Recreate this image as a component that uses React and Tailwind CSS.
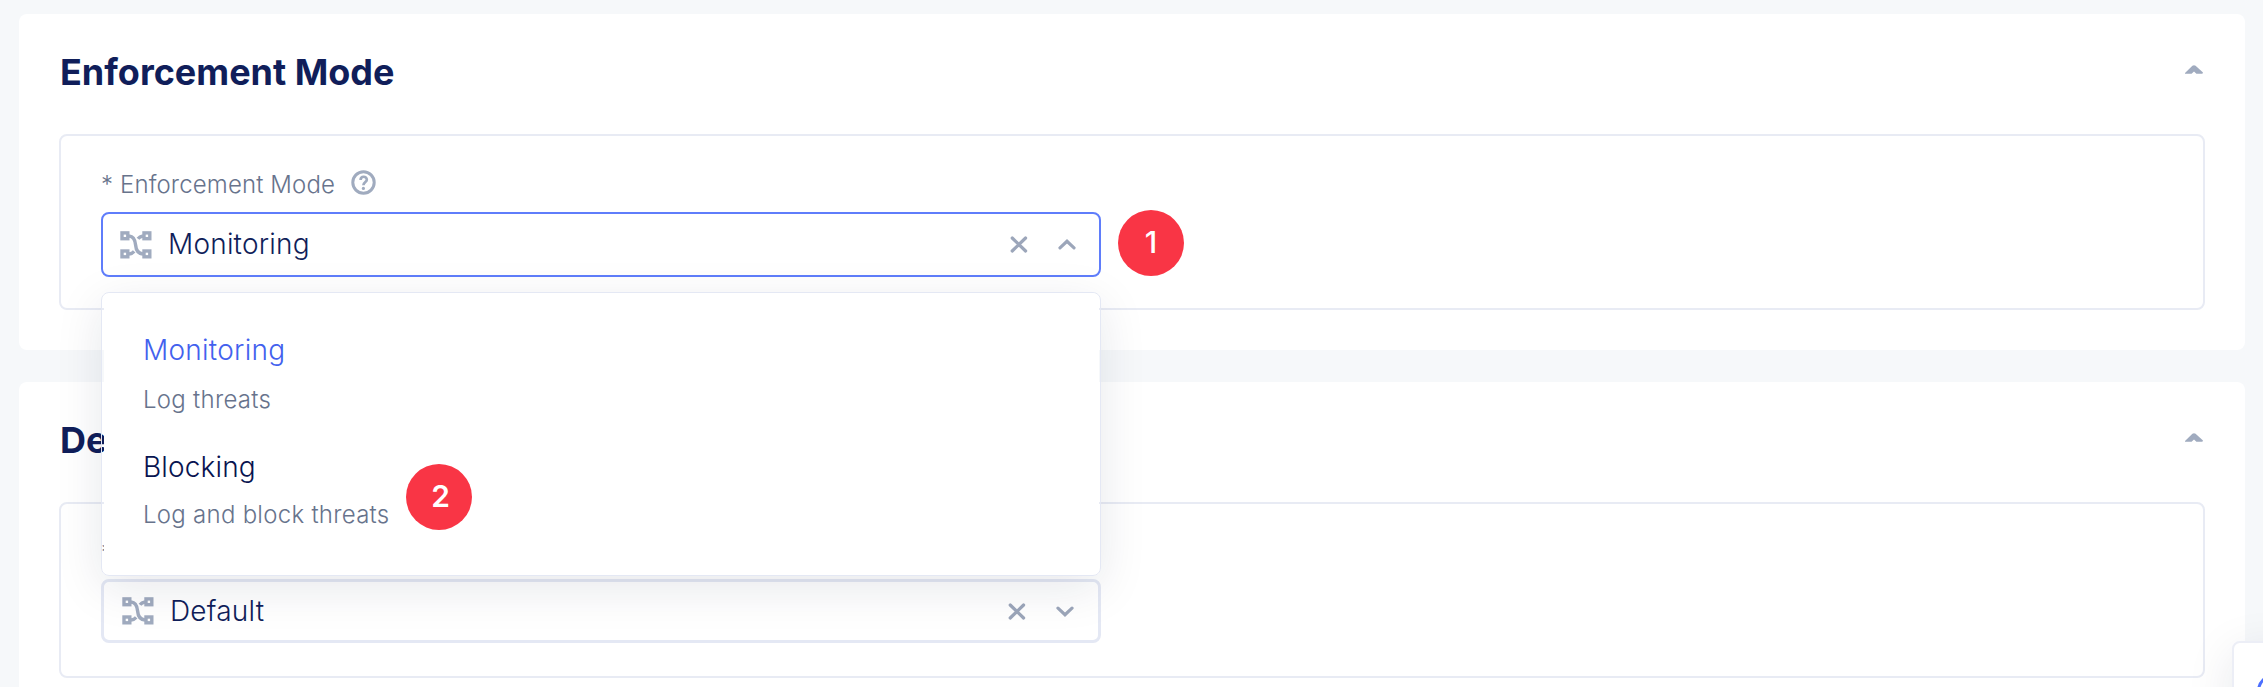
import React from "react";

function NodesIcon() {
  return (
    <svg width="32" height="28" viewBox="0 0 32 28" fill="none" stroke="#a0abbf" strokeWidth="3.4" className="shrink-0">
      <rect x="2" y="1.9" width="5.8" height="5.8" />
      <rect x="24" y="1.9" width="5.8" height="5.8" />
      <rect x="2" y="20" width="5.8" height="5.8" />
      <rect x="24" y="20" width="5.8" height="5.8" />
      <path d="M9 5 C14 5.4 15.2 9 15.6 14 C16 19 18 22.6 23 23" />
      <path d="M23 5 C20.4 5.4 19 6.4 18 7.8" />
      <path d="M9 23 C11.4 22.8 13 21.8 14.2 20.4" />
    </svg>
  );
}

function ClearIcon() {
  return (
    <svg width="18" height="17" viewBox="0 0 18 17" fill="none" stroke="#9ca6ba" strokeWidth="3.2" strokeLinecap="round" className="shrink-0">
      <path d="M2.2 2 L15.6 15 M15.6 2 L2.2 15" />
    </svg>
  );
}

function Chevron({ up }) {
  return (
    <svg width="18" height="11" viewBox="0 0 18 11" fill="none" stroke="#9ca6ba" strokeWidth="3.2" strokeLinecap="round" className="shrink-0">
      <path d={up ? "M2 8.8 L9 2.3 L16 8.8" : "M2 2.2 L9 8.7 L16 2.2"} />
    </svg>
  );
}

function HelpIcon() {
  return (
    <svg width="25" height="25" viewBox="0 0 25 25" fill="none" stroke="#a0abbf" className="shrink-0">
      <circle cx="12.5" cy="12.5" r="10.7" strokeWidth="3" />
      <path d="M9.6 10 C9.6 5.6 15.8 5.8 15.8 9.7 C15.8 12 12.4 12 12.4 15.3" strokeWidth="2.7" />
      <circle cx="12.4" cy="18.4" r="1.6" fill="#a0abbf" stroke="none" />
    </svg>
  );
}

function CollapseIcon() {
  return (
    <svg width="18" height="9" viewBox="0 0 18 9" fill="#a0abbf" className="shrink-0">
      <path d="M0 8.8 L0 8 L7.4 0.8 Q9 -0.5 10.6 0.8 L18 7.4 L17.4 8.8 H11.4 L9 6.4 L6.6 8.8 Z" />
    </svg>
  );
}

function Marker({ children, className }) {
  return (
    <div className={`absolute flex size-[66px] items-center justify-center rounded-full bg-[#f93545] text-[30px] leading-none text-white ${className}`}>
      {children}
    </div>
  );
}

function Card({ title, children }) {
  return (
    <section className="h-[336px] shrink-0 rounded-[8px] bg-white px-10">
      <header className="flex h-[120px] items-center justify-between pr-[2px] pb-[4px] pl-px">
        <h2 className="text-[36px] leading-[44px] font-bold text-[#101e5a]">{title}</h2>
        <div className="pb-[6px]"><CollapseIcon /></div>
      </header>
      <div className="h-[176px] rounded-[8px] border-2 border-[#e8ebf4] pl-[40px]">{children}</div>
    </section>
  );
}

export default function App() {
  return (
    <div className="relative flex h-[687px] w-[2263px] flex-col gap-8 overflow-hidden bg-[#f6f8fa] pt-[14px] pr-[18px] pl-[19px] font-['Inter',sans-serif]">
      <Card title="Enforcement Mode">
        <div className="flex h-[76px] items-center pt-[22px]">
          <span className="text-[24px] leading-[30px] font-[350] tracking-[0.13px] text-[#67738c]">* Enforcement Mode</span>
          <span className="ml-[16px] pb-[6px]"><HelpIcon /></span>
        </div>
        <div className="relative w-[1000px]">
          <div className="flex h-[65px] items-center rounded-[8px] border-2 border-[#5f7dfb] pr-[23px] pl-[17px]">
            <NodesIcon />
            <span className="ml-[16px] flex-1 pb-[2px] text-[28px] leading-[34px] font-light tracking-[0.2px] text-[#101e5a]">Monitoring</span>
            <ClearIcon />
            <span className="ml-[30px]"><Chevron up /></span>
          </div>
          <Marker className="top-[-2px] left-[1017px] pb-[2px] font-medium">1</Marker>
          <div className="absolute top-[80px] left-0 z-10 h-[284px] w-[1000px] rounded-[8px] border border-[#e4e8f4] pr-px pb-px pl-[2px] shadow-[0_12px_48px_rgba(20,30,60,0.10)]">
            <div className="h-full rounded-[7px] bg-white pt-[40px] pl-[39px]">
              <div className="text-[28px] leading-[34px] font-light tracking-[0.25px] text-[#4361ee]">Monitoring</div>
              <div className="mt-[18px] text-[24px] leading-[30px] font-[350] tracking-[0.27px] text-[#67738c]">Log threats</div>
              <div className="mt-[35px] text-[28px] leading-[34px] font-light tracking-[0.15px] text-[#081450]">Blocking</div>
              <div className="mt-[16px] text-[24px] leading-[30px] font-[350] tracking-[0.27px] text-[#67738c]">Log and block threats</div>
            </div>
            <Marker className="top-[171px] left-[304px] pl-[3px] pb-[2px] font-semibold">2</Marker>
          </div>
        </div>
      </Card>
      <Card title="De">
        <div className="flex h-[75px] items-center pt-[23px]">
          <span className="text-[24px] leading-[30px] font-[350] text-[#67738c]">*</span>
        </div>
        <div className="flex h-[64px] w-[1000px] items-center rounded-[8px] border-[3px] border-[#e4e8f4] pr-[24px] pl-[18px]">
          <NodesIcon />
          <span className="ml-[16px] flex-1 text-[28px] leading-[34px] font-light tracking-[0.2px] text-[#101e5a]">Default</span>
          <ClearIcon />
          <span className="ml-[30px]"><Chevron /></span>
        </div>
      </Card>
      <div className="absolute top-[641px] left-[2232px] h-[80px] w-[80px] rounded-[8px] border-2 border-[#eceef6] bg-white pt-[31px] pl-[23px] shadow-[0_12px_48px_rgba(20,30,60,0.10)]">
        <svg width="40" height="40" viewBox="0 0 40 40" fill="none" stroke="#4c6fff" strokeWidth="3">
          <circle cx="17" cy="17" r="15.5" />
        </svg>
      </div>
    </div>
  );
}
